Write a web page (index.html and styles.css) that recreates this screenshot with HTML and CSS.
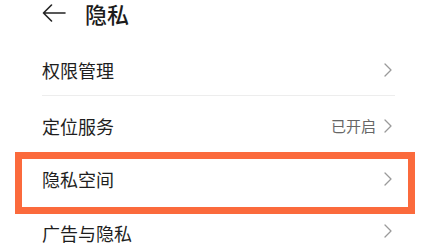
FILE: index.html
```html
<!DOCTYPE html>
<html lang="zh-CN">
<head>
<meta charset="utf-8">
<link rel="stylesheet" href="styles.css">
</head>
<body>
<div class="header">
  <svg class="back" width="24" height="18" viewBox="0 0 24 18"><path d="M23 9H1.5M9.5 1L1.5 9L9.5 17" fill="none" stroke="#222" stroke-width="1.6" stroke-linecap="round" stroke-linejoin="round"/></svg>
  <span class="title">隐私</span>
</div>
<div class="list">
  <div class="row r1"><span class="label">权限管理</span><span class="end"><svg class="chev" width="8" height="14" viewBox="0 0 8 14"><path d="M1 1L7 7L1 13" fill="none" stroke="#9a9a9a" stroke-width="1.3" stroke-linecap="round" stroke-linejoin="round"/></svg></span></div>
  <div class="row r2"><span class="label">定位服务</span><span class="end"><span class="value">已开启</span><svg class="chev" width="8" height="14" viewBox="0 0 8 14"><path d="M1 1L7 7L1 13" fill="none" stroke="#9a9a9a" stroke-width="1.3" stroke-linecap="round" stroke-linejoin="round"/></svg></span></div>
  <div class="row r3 hl"><span class="label">隐私空间</span><span class="end"><svg class="chev" width="8" height="14" viewBox="0 0 8 14"><path d="M1 1L7 7L1 13" fill="none" stroke="#9a9a9a" stroke-width="1.3" stroke-linecap="round" stroke-linejoin="round"/></svg></span></div>
  <div class="row r4"><span class="label">广告与隐私</span><span class="end"><svg class="chev" width="8" height="14" viewBox="0 0 8 14"><path d="M1 1L7 7L1 13" fill="none" stroke="#9a9a9a" stroke-width="1.3" stroke-linecap="round" stroke-linejoin="round"/></svg></span></div>
</div>
</body>
</html>
```
FILE: styles.css
```css
html, body {
  margin: 0;
  background: #ffffff;
  overflow: hidden;
}
body {
  font-family: "Noto Sans CJK SC", "Noto Sans", sans-serif;
  color: #222;
  width: 425px;
  height: 250px;
}
.header {
  height: 26px;
  display: flex;
  align-items: center;
  padding-left: 42px;
  gap: 19px;
}
.title {
  font-size: 22px;
  line-height: 26px;
  font-weight: 500;
  color: #1c1c1c;
}
.list {
  margin-top: 18px;
}
.row {
  display: flex;
  align-items: center;
  justify-content: space-between;
  margin-left: 42px;
  margin-right: 30px;
}
.label {
  font-size: 18px;
  line-height: 24px;
  color: #1e1e1e;
}
.end {
  display: flex;
  align-items: center;
  gap: 8px;
  padding-right: 3px;
}
.value {
  font-size: 15px;
  line-height: 20px;
  color: #666;
}
.chev {
  display: block;
}
.r1 {
  height: 51px;
  border-bottom: 1px solid #ededed;
}
.r2 {
  height: 60px;
}
.r3 {
  height: 46px;
}
.r4 {
  height: 29px;
  align-items: flex-start;
  padding-top: 19px;
}
.r4 .end {
  margin-top: 3px;
}
.hl {
  position: relative;
}
.hl::after {
  content: "";
  position: absolute;
  left: -27px;
  right: -20px;
  top: -4px;
  bottom: -12px;
  border: 7.5px solid #fb6a3c;
  pointer-events: none;
}
```
